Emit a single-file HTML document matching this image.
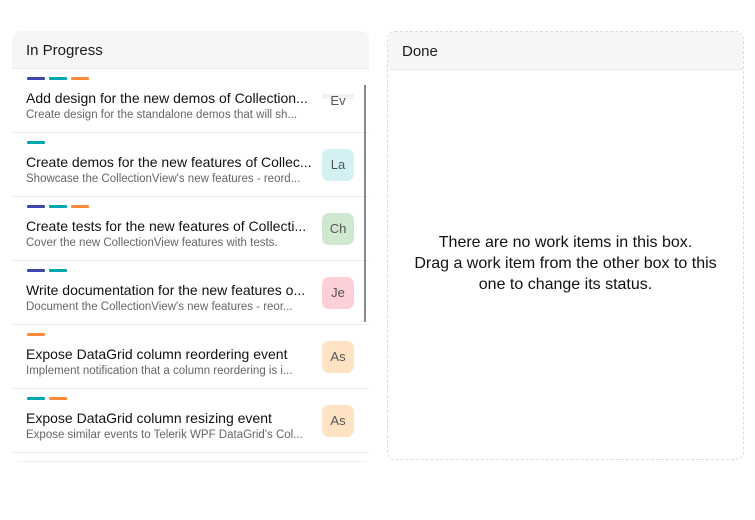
<!DOCTYPE html>
<html><head><meta charset="utf-8"><style>
*{margin:0;padding:0;box-sizing:border-box}
body{width:755px;height:520px;background:#fff;font-family:"Segoe UI","Liberation Sans",sans-serif;position:relative;overflow:hidden;color:#1a1a1a}
.col{position:absolute;top:31px;border-radius:8px}
.left{left:12px;width:357px;height:424px}
.right{left:387px;width:357px;height:429px;border:1px dashed #dcdcdc}
.hdr{height:38px;background:#f6f6f6;border-bottom:1px solid #ececec;border-radius:8px 8px 0 0;font-size:15px;padding:11px 0 0 14px}
.row{position:absolute;left:0;width:357px;height:64px;border-bottom:1px solid #ececec}
.bars{position:absolute;left:15px;top:8px;height:3px}
.bars i{display:inline-block;width:18px;height:3px;margin-right:4px;vertical-align:top;border-radius:1px}
.b{background:#3f48a8}.t{background:#00a6ad}.o{background:#ff8a3c}
.ti{position:absolute;left:14px;top:21px;font-size:14px;color:#111;white-space:nowrap}
.su{position:absolute;left:14px;top:40px;font-size:11.5px;color:#666;white-space:nowrap}
.av{position:absolute;left:310px;top:16px;width:32px;height:32px;border-radius:7px;font-size:13px;color:#555;text-align:center;line-height:32px}
.sb{position:absolute;left:352px;top:54px;width:2px;height:237px;background:#888}
.msg{position:absolute;left:0;width:355px;top:200px;text-align:center;font-size:16px;line-height:21px;color:#111}
</style></head><body>
<div class="col left">
<div class="hdr">In Progress</div>
<div class="row" style="top:38px"><div class="bars"><i class="b"></i><i class="t"></i><i class="o"></i></div><div class="ti">Add design for the new demos of Collection...</div><div class="su">Create design for the standalone demos that will sh...</div><div class="av" style="background:linear-gradient(#fff 0,#fff 9px,#f3f3f3 9px,#f3f3f3 14px,#fff 14px)">Ev</div></div>
<div class="row" style="top:102px"><div class="bars"><i class="t"></i></div><div class="ti">Create demos for the new features of Collec...</div><div class="su">Showcase the CollectionView's new features - reord...</div><div class="av" style="background:#d3f1f3">La</div></div>
<div class="row" style="top:166px"><div class="bars"><i class="b"></i><i class="t"></i><i class="o"></i></div><div class="ti">Create tests for the new features of Collecti...</div><div class="su">Cover the new CollectionView features with tests.</div><div class="av" style="background:#cfe8cf">Ch</div></div>
<div class="row" style="top:230px"><div class="bars"><i class="b"></i><i class="t"></i></div><div class="ti">Write documentation for the new features o...</div><div class="su">Document the CollectionView's new features - reor...</div><div class="av" style="background:#fcd0d6">Je</div></div>
<div class="row" style="top:294px"><div class="bars"><i class="o"></i></div><div class="ti">Expose DataGrid column reordering event</div><div class="su">Implement notification that a column reordering is i...</div><div class="av" style="background:#fde3c4">As</div></div>
<div class="row" style="top:358px"><div class="bars"><i class="t"></i><i class="o"></i></div><div class="ti">Expose DataGrid column resizing event</div><div class="su">Expose similar events to Telerik WPF DataGrid's Col...</div><div class="av" style="background:#fde3c4">As</div></div>
<div style="position:absolute;left:5px;top:430px;width:350px;height:1px;background:#eee"></div>
<div class="sb"></div>
</div>
<div class="col right">
<div class="hdr">Done</div>
<div class="msg">There are no work items in this box.<br>Drag a work item from the other box to this<br>one to change its status.</div>
</div>
</body></html>
